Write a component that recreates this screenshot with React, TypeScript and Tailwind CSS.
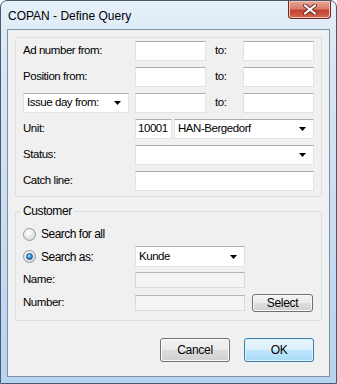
import clsx from "clsx";

const field = "border border-[#dfe3ea] border-t-[#abadb3] bg-white";

function TextBox({ className, value }: { className: string; value?: string }) {
  return (
    <div className={clsx("flex h-[20px] items-center px-[2px]", field, className)}>
      {value}
    </div>
  );
}

function DisabledBox({ className }: { className: string }) {
  return <div className={clsx("h-[16px] border border-[#d9d9d9] border-t-[#b5b5b5] bg-[#f4f4f4]", className)} />;
}

function Arrow() {
  return (
    <svg width="7" height="4" viewBox="0 0 7 4" className="shrink-0">
      <path d="M0 0h7L3.5 4z" fill="#000" />
    </svg>
  );
}

function Combo({ className, value, tall }: { className: string; value?: string; tall?: boolean }) {
  return (
    <div className={clsx("flex items-center justify-between pl-[3px] pr-[7px]", tall ? "h-[21px]" : "h-[20px]", field, className)}>
      <span>{value}</span>
      <Arrow />
    </div>
  );
}

function Radio({ checked, label }: { checked?: boolean; label: string }) {
  return (
    <div className="flex items-center gap-[5px]">
      <span className="flex h-[13px] w-[13px] items-center justify-center rounded-full border border-[#8f9aa5] bg-[radial-gradient(circle_at_40%_35%,#ffffff_0%,#e6e6e6_55%,#c9c9c9_100%)]">
        {checked && (
          <span className="h-[7px] w-[7px] rounded-full border border-[#1b4b7a] bg-[radial-gradient(circle_at_40%_35%,#b9e6fb_0%,#3d97dc_45%,#0d4f93_100%)]" />
        )}
      </span>
      <span className="text-[12px] tracking-[-0.5px]">{label}</span>
    </div>
  );
}

function VistaButton({ label, primary, className }: { label: string; primary?: boolean; className: string }) {
  return (
    <button
      type="button"
      className={clsx(
        "flex items-center justify-center rounded-[3px] border text-[12px] tracking-[-0.3px] text-black",
        primary
          ? "border-[#3c7fb1] bg-[linear-gradient(180deg,#eaf6fd_0%,#d9f0fc_48%,#bee6fd_52%,#a7d9f5_100%)] shadow-[inset_0_0_0_1px_#dff3fd]"
          : "border-[#707070] bg-[linear-gradient(180deg,#f2f2f2_0%,#ebebeb_48%,#dddddd_52%,#cfcfcf_100%)] shadow-[inset_0_0_0_1px_#fbfbfb]",
        className,
      )}
    >
      {label}
    </button>
  );
}

function CloseButton() {
  return (
    <div className="mr-[5px] flex h-[18px] w-[43px] items-center justify-center self-start rounded-b-[4px] border border-t-0 border-[#6e2a24] bg-[linear-gradient(180deg,#e9a89a_0%,#d77d6c_45%,#c2402f_55%,#d26a4e_100%)] shadow-[inset_0_0_0_1px_#f2c4b8]">
      <svg width="14" height="11" viewBox="0 0 14 11">
        <path d="M2 1.5l10 8M12 1.5l-10 8" stroke="#6b2b25" strokeWidth="4" strokeLinecap="round" />
        <path d="M2 1.5l10 8M12 1.5l-10 8" stroke="#ffffff" strokeWidth="2.2" strokeLinecap="round" />
      </svg>
    </div>
  );
}

export default function App() {
  return (
    <div className="flex h-[384px] w-[337px] flex-col overflow-hidden rounded-t-[7px] border border-[#4a5b70] bg-[linear-gradient(180deg,#e6f0f9_0%,#d8e7f5_15%,#c9ddf1_60%,#b6d3ef_100%)] font-['Liberation_Sans',Arial,sans-serif] text-[12px] text-black">
      <div className="flex h-[28px] shrink-0 items-center">
        <span className="pl-[7px] pt-[1px] text-[12px] text-black">COPAN - Define Query</span>
        <div className="ml-auto self-start">
          <CloseButton />
        </div>
      </div>

      <div className="mx-[6px] flex h-[348px] shrink-0 flex-col border border-[#7e90a6] bg-[#f0f0f0] px-[7px] pt-[7px] text-[11.5px] tracking-[-0.45px]">
        <div className="flex h-[160px] flex-col gap-[6px] rounded-[3px] border border-[#d5dfe5] pl-[7px] pt-[3px]">
          <div className="flex items-center">
            <span className="w-[112px]">Ad number from:</span>
            <TextBox className="w-[71px]" />
            <span className="w-[37px] pl-[9px]">to:</span>
            <TextBox className="w-[71px]" />
          </div>
          <div className="flex items-center">
            <span className="w-[112px]">Position from:</span>
            <TextBox className="w-[71px]" />
            <span className="w-[37px] pl-[9px]">to:</span>
            <TextBox className="w-[71px]" />
          </div>
          <div className="flex items-center">
            <div className="w-[112px]">
              <Combo className="w-[106px]" value="Issue day from:" />
            </div>
            <TextBox className="w-[71px]" />
            <span className="w-[37px] pl-[9px]">to:</span>
            <TextBox className="w-[71px]" />
          </div>
          <div className="flex items-center">
            <span className="w-[112px]">Unit:</span>
            <TextBox className="w-[37px]" value="10001" />
            <Combo className="ml-[2px] w-[140px]" value="HAN-Bergedorf" />
          </div>
          <div className="flex items-center">
            <span className="w-[112px]">Status:</span>
            <Combo className="w-[179px]" />
          </div>
          <div className="flex items-center">
            <span className="w-[112px]">Catch line:</span>
            <TextBox className="w-[179px]" />
          </div>
        </div>

        <div className="relative mt-[14px] flex h-[110px] flex-col rounded-[3px] border border-[#d5dfe5] pl-[7px] pt-[12px]">
          <span className="absolute left-[5px] top-[-8px] bg-[#f0f0f0] px-[2px] text-[12px] leading-[14px] tracking-[-0.4px]">Customer</span>
          <div className="flex h-[20px] items-center">
            <Radio label="Search for all" />
          </div>
          <div className="mt-[2px] flex h-[21px] items-center">
            <div className="w-[112px]">
              <Radio checked label="Search as:" />
            </div>
            <Combo tall className="w-[110px]" value="Kunde" />
          </div>
          <div className="mt-[5px] flex h-[16px] items-center">
            <span className="w-[112px]">Name:</span>
            <DisabledBox className="w-[110px]" />
          </div>
          <div className="mt-[6px] flex h-[18px] items-center">
            <span className="w-[112px]">Number:</span>
            <DisabledBox className="w-[110px]" />
            <VistaButton label="Select" className="ml-[7px] h-[18px] w-[61px]" />
          </div>
        </div>

        <div className="mt-[17px] flex justify-end gap-[14px] pr-[8px]">
          <VistaButton label="Cancel" className="h-[24px] w-[70px]" />
          <VistaButton primary label="OK" className="h-[24px] w-[70px]" />
        </div>
      </div>
    </div>
  );
}
